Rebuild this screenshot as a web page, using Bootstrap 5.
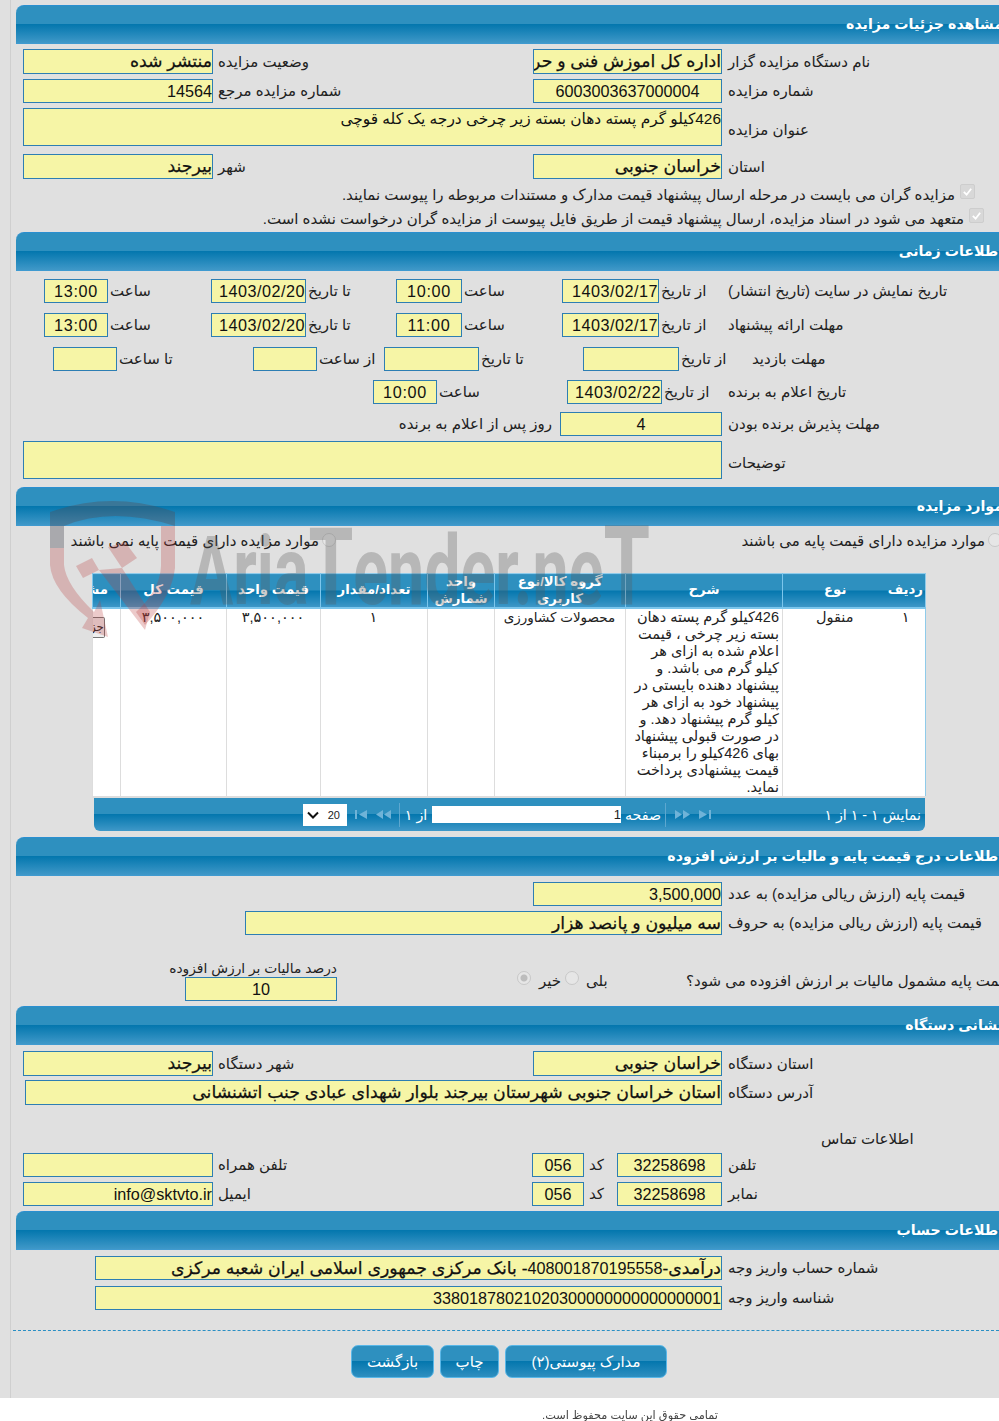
<!DOCTYPE html>
<html lang="fa">
<head>
<meta charset="utf-8">
<title>مشاهده جزئیات مزایده</title>
<link rel="stylesheet" href="https://cdn.jsdelivr.net/npm/bootstrap@5.3.0/dist/css/bootstrap.min.css">
<style>
html,body{margin:0;background:#fff;width:999px;height:1421px;overflow:hidden}
body{font-family:"Liberation Sans","DejaVu Sans",sans-serif;font-size:15px;color:#222;line-height:18px}
.sheet{position:relative;height:1398px;background:linear-gradient(90deg,#e0e0e0 10px,#cfcfcf 10px,#cfcfcf 11px,#e0e0e0 11px);overflow:hidden;padding-top:5px}
.hbar{height:39px;margin-left:16px;width:990px;border-top:1px solid #2a8fd0;border-bottom:1px solid #3f9ad0;border-radius:8px 0 0 0;background:linear-gradient(#2e90bf 0,#2e90bf 49%,#0477ae 50%,#3f98c8 100%);color:#fff;font-weight:700;font-size:14.2px;padding-right:3px;line-height:37px;white-space:nowrap;text-align:right}
.rw{display:grid;align-items:center;height:24px;margin-top:5px}
.rw>*{min-width:0}
.m-main{grid-template-columns:23px 190px 320px 189px 6px 1fr}
.lb{text-align:left;padding-left:5px;white-space:nowrap}
.rw>.lb:last-child{padding-left:0}
.rw>.lb.dn{padding-top:5px}
.rw>.lb.far{padding-left:24px}
.fbox{height:100%;background:#f6f5a6;border:1px solid #2d7eb3;font-size:16.2px;color:#111;white-space:nowrap;overflow:hidden;text-align:right;line-height:22px}
.ce{text-align:center}
.dt{text-align:right;letter-spacing:.5px}
.tm{text-align:center;letter-spacing:.7px}
.fbold{font-size:17.3px;-webkit-text-stroke:.25px #111}
.num{font-size:16.2px;-webkit-text-stroke:0}
.ta{font-size:15.4px;line-height:20px}
.h38{height:38px}
.h25{height:25px}
.t8{margin-top:8px}.t6{margin-top:6px}.t9{margin-top:9px}.t10{margin-top:10px}.t4{margin-top:4px}.t5x{margin-top:5px}
.m-t1{grid-template-columns:44px 64px 103px 95px 90px 66px 100px 97px 69px 1fr}
.m-t2{grid-template-columns:53px 64px 136px 64px 67px 95px 104px 96px 49px 1fr}
.m-t3{grid-template-columns:373px 64px 130px 95px 66px 1fr}
.m-t1 .lb,.m-t2 .lb,.m-t3 .lb{padding-left:2px}
.m-t4{grid-template-columns:403px 157px 162px 6px 1fr}
.nw{white-space:nowrap}
.m-tx{grid-template-columns:23px 699px 6px 1fr}
.m-pr{grid-template-columns:533px 189px 6px 1fr}
.m-wd{grid-template-columns:245px 477px 6px 1fr}
.m-ad{grid-template-columns:25px 697px 6px 1fr}
.m-ct{grid-template-columns:23px 190px 319px 52px 33px 105px 6px 1fr}
.m-ac{grid-template-columns:95px 627px 6px 1fr}
.ck{display:flex;align-items:flex-start;justify-content:flex-end;white-space:nowrap;height:24px}
.tick{width:15px;height:15px;background:#d8d8d8;border:1px solid #cdcdcd;border-radius:2px;flex:none;display:inline-flex;align-items:center;justify-content:center}
.c1{padding-right:24px;margin-top:5px}.c2{padding-right:15px}
.ck span{padding-top:2px;margin-right:5px}
.rads{display:grid;grid-template-columns:336px 666px;height:18px;margin-top:7px;white-space:nowrap}
.rd{width:14px;height:14px;border-radius:50%;background:#e6e6e6;border:1px solid #c8c8c8;flex:none;display:inline-block}
.rd.on{background:radial-gradient(#bdbdbd 0 3px,#e6e6e6 4px)}
.rads .rd{align-self:flex-start}
.rads span{margin:-1px 3px 0 0}
.gridwrap{margin:22px 0 0 92px;width:833px}
.k1{width:28px}.k2{width:106px}.k3{width:94px}.k4{width:107px}.k5{width:67px}.k6{width:131px}.k7{width:157px}.k8{width:105px}.k9{width:38px}
.tbl.table{margin:0;table-layout:fixed;width:833px;border:1px solid #8fcbea;border-collapse:collapse;--bs-table-bg:#fff}
.tbl th{height:33px;padding:0 2px;background:linear-gradient(#2e90bf 0,#2e90bf 49%,#0477ae 50%,#3f98c8 100%);color:#fff;border:0;border-left:1px solid #7cc6ec;border-bottom:2px solid #7cc6ec;text-align:center;vertical-align:middle;font-size:13.3px;line-height:16.5px;font-weight:700;overflow:hidden}
.tbl td{height:187px;padding:0 3px 0 2px;background:#fff;color:#222;border:0;border-left:1px solid #ddd;border-bottom:2px solid #ddd;text-align:center;vertical-align:top;font-size:14.5px;line-height:17px;overflow:hidden}
.tbl th:last-child,.tbl td:last-child{border-left:0}
.tbl td.ds{text-align:right;white-space:nowrap}
.tbl td.gp{font-size:13.5px}
.tbl th.clipcell{white-space:nowrap;text-align:right;padding:0 12px 0 0}
.tbl td.stubcell{padding:0}
.stub{display:block;width:12px;height:21px;margin-top:8px;border:1px solid #777;border-radius:0 2px 2px 0;border-left:0;background:#eee;font-size:12px;line-height:19px;overflow:hidden;white-space:nowrap}
.pgr{height:33px;margin-left:2px;width:831px;background:linear-gradient(#2e90bf 0,#2e90bf 49%,#0477ae 50%,#3f98c8 100%);border-radius:0 0 6px 6px;color:#fff;display:grid;grid-template-columns:253px 53px 32px 189px 44px 55px 1fr;align-items:center;white-space:nowrap;font-size:14.2px}
.pgsel{justify-self:end;width:44px;height:22px;background:#fff;color:#222;display:flex;justify-content:space-between;align-items:center;padding:0 7px 0 4px;font-size:11px}
.pgbt{height:24px;display:flex;align-items:center;justify-content:center;gap:9px}
.pgb1{border-right:1px solid #5da7cf}
.pgb2{border-left:1px solid #5da7cf}
.pgin{height:17px;background:#fff;color:#222;text-align:right;line-height:17px;font-size:13px;overflow:hidden}
.tax{display:grid;grid-template-columns:185px 152px 180px 14px 9px 21px 4px 14px 7px 100px max-content;height:43px;margin-top:23px;white-space:nowrap;align-items:end}
.taxw{display:flex;flex-direction:column;align-items:flex-end}
.taxw .fbox{width:152px;height:24px;flex:none}
.taxw span{margin-bottom:-1px;font-size:13.8px}
.tax>[dir]{margin-bottom:11px;text-align:left}
.tax>.rd{margin-bottom:16px}
.inf{margin:25px 0 0 821px;width:120px;height:18px;white-space:nowrap;text-align:left}
.dash{border-top:1px dashed #2a8fc4;margin:20px 0 0 13px}
.acts{margin-top:14px;padding-left:19px;gap:6px}
.abtn.btn{height:33px;padding:0;color:#fff;font-size:15px;border:1px solid #59b7e8;border-radius:7px;background:linear-gradient(#2e90bf 0,#2e90bf 49%,#0477ae 50%,#2f8fc0 100%);--bs-btn-hover-color:#fff;line-height:30px}
.b1{width:162px}.b2{width:59px}.b3{width:83px}
.foot{height:23px;text-align:center;font-size:11.3px;color:#444;padding-left:261px;padding-top:12px;white-space:nowrap;line-height:11px;filter:blur(.4px)}
.wmark{position:absolute;left:0;top:0;width:999px;height:700px;pointer-events:none}
.wmtx{font-family:"Roboto",sans-serif;font-weight:700;fill:#5a5a5a;fill-opacity:.3}
</style>
</head>
<body>
<div class="sheet">
  <div class="hbar" dir="rtl">مشاهده جزئیات مزایده</div>
  <div class="rw h25 m-main">
    <i></i><div class="fbox fbold" dir="rtl">منتشر شده</div><div class="lb" dir="rtl">وضعیت مزایده</div>
    <div class="fbox fbold" dir="rtl">اداره کل اموزش فنی و حرفه ای خراسان جنوبی</div><i></i><div class="lb" dir="rtl">نام دستگاه مزایده گزار</div>
  </div>
  <div class="rw m-main">
    <i></i><div class="fbox" dir="rtl">14564</div><div class="lb" dir="rtl">شماره مزایده مرجع</div>
    <div class="fbox ce">6003003637000004</div><i></i><div class="lb" dir="rtl">شماره مزایده</div>
  </div>
  <div class="rw h38 m-tx">
    <i></i><div class="fbox ta" dir="rtl">426کیلو گرم پسته دهان بسته زیر چرخی درجه یک کله قوچی</div><i></i><div class="lb dn" dir="rtl">عنوان مزایده</div>
  </div>
  <div class="rw h25 t8 m-main">
    <i></i><div class="fbox fbold" dir="rtl">بیرجند</div><div class="lb" dir="rtl">شهر</div>
    <div class="fbox fbold" dir="rtl">خراسان جنوبی</div><i></i><div class="lb" dir="rtl">استان</div>
  </div>
  <div class="ck c1" dir="ltr"><span dir="rtl">مزایده گران می بایست در مرحله ارسال پیشنهاد قیمت مدارک و مستندات مربوطه را پیوست نمایند.</span><i class="tick"><svg width="11" height="11" viewBox="0 0 12 12"><path d="M2 6.5 5 9.5 10 3" fill="none" stroke="#fff" stroke-width="2"/></svg></i></div>
  <div class="ck c2" dir="ltr"><span dir="rtl">متعهد می شود در اسناد مزایده، ارسال پیشنهاد قیمت از طریق فایل پیوست از مزایده گران درخواست نشده است.</span><i class="tick"><svg width="11" height="11" viewBox="0 0 12 12"><path d="M2 6.5 5 9.5 10 3" fill="none" stroke="#fff" stroke-width="2"/></svg></i></div>

  <div class="hbar" dir="rtl">اطلاعات زمانی</div>
  <div class="rw t8 m-t1">
    <i></i><div class="fbox tm">13:00</div><div class="lb" dir="rtl">ساعت</div><div class="fbox dt">1403/02/20</div><div class="lb" dir="rtl">تا تاریخ</div><div class="fbox tm">10:00</div><div class="lb" dir="rtl">ساعت</div><div class="fbox dt">1403/02/17</div><div class="lb" dir="rtl">از تاریخ</div><div class="lb" dir="rtl">تاریخ نمایش در سایت (تاریخ انتشار)</div>
  </div>
  <div class="rw t10 m-t1">
    <i></i><div class="fbox tm">13:00</div><div class="lb" dir="rtl">ساعت</div><div class="fbox dt">1403/02/20</div><div class="lb" dir="rtl">تا تاریخ</div><div class="fbox tm">11:00</div><div class="lb" dir="rtl">ساعت</div><div class="fbox dt">1403/02/17</div><div class="lb" dir="rtl">از تاریخ</div><div class="lb" dir="rtl">مهلت ارائه پیشنهاد</div>
  </div>
  <div class="rw t10 m-t2">
    <i></i><div class="fbox"></div><div class="lb" dir="rtl">تا ساعت</div><div class="fbox"></div><div class="lb" dir="rtl">از ساعت</div><div class="fbox"></div><div class="lb" dir="rtl">تا تاریخ</div><div class="fbox"></div><div class="lb" dir="rtl">از تاریخ</div><div class="lb far" dir="rtl">مهلت بازدید</div>
  </div>
  <div class="rw t9 m-t3">
    <i></i><div class="fbox tm">10:00</div><div class="lb" dir="rtl">ساعت</div><div class="fbox dt">1403/02/22</div><div class="lb" dir="rtl">از تاریخ</div><div class="lb" dir="rtl">تاریخ اعلام به برنده</div>
  </div>
  <div class="rw t8 m-t4">
    <i></i><div class="text-end pe-2 nw" dir="rtl">روز پس از اعلام به برنده</div><div class="fbox ce">4</div><i></i><div class="lb" dir="rtl">مهلت پذیرش برنده بودن</div>
  </div>
  <div class="rw h38 m-tx">
    <i></i><div class="fbox"></div><i></i><div class="lb dn" dir="rtl">توضیحات</div>
  </div>

  <div class="hbar t8" dir="rtl">موارد مزایده</div>
  <div class="rads">
    <div class="d-flex justify-content-end"><span dir="rtl">موارد مزایده دارای قیمت پایه نمی باشند</span><i class="rd"></i></div>
    <div class="d-flex justify-content-end"><span dir="rtl">موارد مزایده دارای قیمت پایه می باشند</span><i class="rd"></i></div>
  </div>
  <div class="gridwrap">
    <table class="table tbl" dir="ltr">
      <colgroup><col class="k1"><col class="k2"><col class="k3"><col class="k4"><col class="k5"><col class="k6"><col class="k7"><col class="k8"><col class="k9"></colgroup>
      <thead><tr>
        <th dir="rtl" class="clipcell">مشاهده</th><th dir="rtl">قیمت کل</th><th dir="rtl">قیمت واحد</th><th dir="rtl">تعداد/مقدار</th><th dir="rtl">واحد شمارش</th><th dir="rtl">گروه کالا/نوع کاربری</th><th dir="rtl">شرح</th><th dir="rtl">نوع</th><th dir="rtl">ردیف</th>
      </tr></thead>
      <tbody><tr>
        <td class="stubcell"><span class="stub" dir="rtl">جزئیات</span></td><td>۳,۵۰۰,۰۰۰</td><td>۳,۵۰۰,۰۰۰</td><td>۱</td><td></td><td class="gp" dir="rtl">محصولات کشاورزی</td>
        <td class="ds" dir="rtl">426کیلو گرم پسته دهان<br>بسته زیر چرخی ، قیمت<br>اعلام شده به ازای هر<br>کیلو گرم می باشد. و<br>پیشنهاد دهنده بایستی در<br>پیشنهاد خود به ازای هر<br>کیلو گرم پیشنهاد دهد. و<br>در صورت قبولی پیشنهاد<br>بهای 426کیلو را برمبناء<br>قیمت پیشنهادی پرداخت<br>نماید.</td>
        <td dir="rtl">منقول</td><td>۱</td>
      </tr></tbody>
    </table>
    <div class="pgr">
      <div class="pgsel"><svg width="12" height="8" viewBox="0 0 12 8"><path d="M1 1.5 6 6.5 11 1.5" fill="none" stroke="#111" stroke-width="2"/></svg><span>20</span></div>
      <div class="pgbt pgb1"><svg width="12" height="9" viewBox="0 0 12 9"><path d="M0 0h2v9H0zM12 0v9L4 4.5z" fill="#6fb3d8"/></svg><svg width="15" height="9" viewBox="0 0 15 9"><path d="M7 0v9L0 4.5zM15 0v9L8 4.5z" fill="#6fb3d8"/></svg></div>
      <div class="text-center" dir="rtl">از ۱</div><div class="pgin">1</div><div class="text-center" dir="rtl">صفحه</div>
      <div class="pgbt pgb2"><svg width="15" height="9" viewBox="0 0 15 9"><path d="M0 0v9l7-4.500zM8 0v9l7-4.500z" fill="#6fb3d8"/></svg><svg width="12" height="9" viewBox="0 0 12 9"><path d="M0 0v9l8-4.500zM10 0h2v9h-2z" fill="#6fb3d8"/></svg></div>
      <div class="text-end pe-1" dir="rtl">نمایش ۱ - ۱ از ۱</div>
    </div>
  </div>

  <div class="hbar t6" dir="rtl">اطلاعات درج قیمت پایه و مالیات بر ارزش افزوده</div>
  <div class="rw t6 m-pr"><i></i><div class="fbox" dir="rtl">3,500,000</div><i></i><div class="lb" dir="rtl">قیمت پایه (ارزش ریالی مزایده) به عدد</div></div>
  <div class="rw m-wd"><i></i><div class="fbox fbold" dir="rtl">سه میلیون و پانصد هزار</div><i></i><div class="lb" dir="rtl">قیمت پایه (ارزش ریالی مزایده) به حروف</div></div>
  <div class="tax">
    <i></i><div class="taxw"><span dir="rtl">درصد مالیات بر ارزش افزوده</span><div class="fbox ce">10</div></div>
    <i></i><i class="rd on"></i><i></i><div dir="rtl">خیر</div><i></i><i class="rd"></i><i></i><div dir="rtl">بلی</div>
    <div dir="rtl">قیمت پایه مشمول مالیات بر ارزش افزوده می شود؟</div>
  </div>

  <div class="hbar t5x" dir="rtl">نشانی دستگاه</div>
  <div class="rw h25 t6 m-main">
    <i></i><div class="fbox fbold" dir="rtl">بیرجند</div><div class="lb" dir="rtl">شهر دستگاه</div>
    <div class="fbox fbold" dir="rtl">خراسان جنوبی</div><i></i><div class="lb" dir="rtl">استان دستگاه</div>
  </div>
  <div class="rw h25 t4 m-ad"><i></i><div class="fbox fbold" dir="rtl">استان خراسان جنوبی شهرستان بیرجند بلوار شهدای عبادی جنب اتشنشانی</div><i></i><div class="lb" dir="rtl">آدرس دستگاه</div></div>
  <div class="inf" dir="rtl">اطلاعات تماس</div>
  <div class="rw m-ct">
    <i></i><div class="fbox"></div><div class="lb" dir="rtl">تلفن همراه</div><div class="fbox ce">056</div><div class="lb" dir="rtl">کد</div><div class="fbox ce">32258698</div><i></i><div class="lb" dir="rtl">تلفن</div>
  </div>
  <div class="rw m-ct">
    <i></i><div class="fbox">info@sktvto.ir</div><div class="lb" dir="rtl">ایمیل</div><div class="fbox ce">056</div><div class="lb" dir="rtl">کد</div><div class="fbox ce">32258698</div><i></i><div class="lb" dir="rtl">نمابر</div>
  </div>

  <div class="hbar t5x" dir="rtl">اطلاعات حساب</div>
  <div class="rw t6 m-ac"><i></i><div class="fbox fbold" dir="rtl">درآمدی-<span class="num">408001870195558</span>- بانک مرکزی جمهوری اسلامی ایران شعبه مرکزی</div><i></i><div class="lb" dir="rtl">شماره حساب واریز وجه</div></div>
  <div class="rw t6 m-ac"><i></i><div class="fbox" dir="rtl">33801878021020300000000000000001</div><i></i><div class="lb" dir="rtl">شناسه واریز وجه</div></div>
  <div class="dash"></div>
  <div class="acts d-flex justify-content-center">
    <button class="btn abtn b3" dir="rtl">بازگشت</button>
    <button class="btn abtn b2" dir="rtl">چاپ</button>
    <button class="btn abtn b1" dir="rtl">مدارک پیوستی(۲)</button>
  </div>

  <svg class="wmark" viewBox="0 0 999 700">
    <path d="M50 512Q112 490 175 512V526Q112 506 64 526V548H50Z" fill="#50505a" fill-opacity=".38"/>
    <path d="M50 548H64V565Q66 585 94 612L100 600 108 637 82 628 88 618Q52 590 50 565Z" fill="#b83c3c" fill-opacity=".27"/>
    <path d="M161 526H175V568Q172 596 145 625L136 612Q160 590 161 566Z" fill="#b83c3c" fill-opacity=".27"/>
    <path d="M76 566 92 558 99 570 83 578ZM108 547 125 542 137 558 122 568ZM99 570 122 568 150 612 145 630Z" fill="#b83c3c" fill-opacity=".27"/>
    <text class="wmtx" x="190" y="604" font-size="96" textLength="460" lengthAdjust="spacingAndGlyphs">Aria<tspan font-size="108">T</tspan>ender.ne<tspan font-size="112">T</tspan></text>
  </svg>
</div>
<div class="foot" dir="rtl">تمامی حقوق این سایت محفوظ است.</div>
</body>
</html>
